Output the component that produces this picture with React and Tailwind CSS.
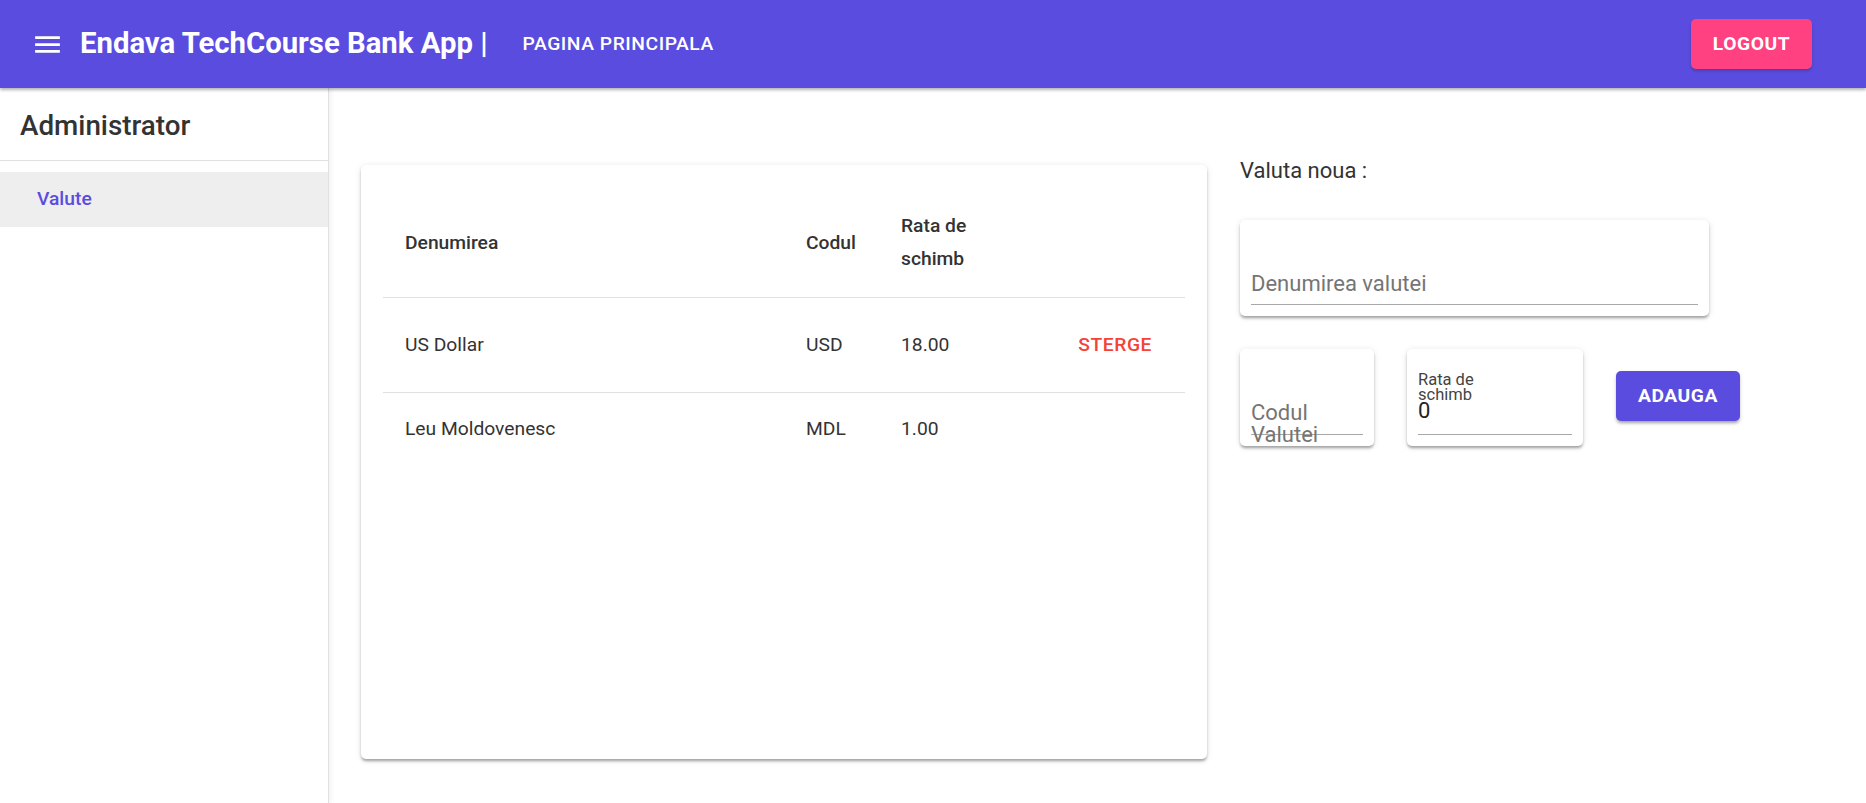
import React from 'react';

const currencies = [
  { name: 'US Dollar', code: 'USD', rate: '18.00', removable: true },
  { name: 'Leu Moldovenesc', code: 'MDL', rate: '1.00', removable: false },
];

const MenuIcon = () => (
  <svg viewBox="0 0 24 24" className="w-[33px] h-[33px] fill-white">
    <path d="M3 18h18v-2H3v2zm0-5h18v-2H3v2zm0-7v2h18V6H3z" />
  </svg>
);

const cardShadow =
  'shadow-[0_3px_3px_-1px_rgba(0,0,0,0.22),0_2px_3px_0_rgba(0,0,0,0.14),0_1px_7px_0_rgba(0,0,0,0.1)]';

const App = () => {
  return (
    <div className="min-h-screen bg-white font-['Roboto',sans-serif] text-[rgba(0,0,0,0.87)]">
      {/* Header */}
      <header className="relative z-10 h-[88px] bg-[#5b4ce0] flex items-center pl-[31px] pr-[54px] shadow-[0_2px_3px_rgba(0,0,0,0.3)]">
        <MenuIcon />
        <h1 className="ml-[16px] text-[29.3px] font-bold text-white leading-none">
          Endava TechCourse Bank App |
        </h1>
        <button className="ml-[24px] px-[11px] text-[19.25px] font-medium tracking-[0.02857em] uppercase text-white">
          Pagina principala
        </button>
        <button className="ml-auto w-[121px] h-[50px] rounded-[5px] bg-[#ff4081] text-white text-[19.25px] font-bold tracking-[0.02857em] uppercase shadow-[0_2px_3px_rgba(0,0,0,0.2)]">
          Logout
        </button>
      </header>

      <div className="flex min-h-[715px]">
        {/* Sidebar */}
        <aside className="w-[329px] shrink-0 border-r border-[#e0e0e0] shadow-[2px_0_5px_rgba(0,0,0,0.06)]">
          <div className="h-[72px] flex items-center pl-[20px] pt-[3px] text-[27.8px] font-medium text-[#333]">
            Administrator
          </div>
          <div className="h-px bg-[#e0e0e0]" />
          <nav className="pt-[11px]">
            <div className="h-[55px] bg-[#eeeeee] flex items-center pl-[37px] text-[19.25px] font-medium text-[#5b4ce0]">
              Valute
            </div>
          </nav>
        </aside>

        {/* Main */}
        <main className="flex-1 flex items-start pl-[32px] pt-[70px] gap-[33px]">
          <div className={`mt-[7px] w-[846px] h-[594px] bg-white rounded-[5px] p-[22px] ${cardShadow}`}>
            <table className="w-full table-fixed border-collapse text-[19.25px] text-[#333]">
              <colgroup>
                <col className="w-[401px]" />
                <col className="w-[95px]" />
                <col className="w-[110px]" />
                <col />
              </colgroup>
              <thead>
                <tr className="border-b border-[#e0e0e0]">
                  <th className="p-[22px] text-left font-medium leading-[33px]">Denumirea</th>
                  <th className="p-[22px] text-left font-medium leading-[33px]">Codul</th>
                  <th className="p-[22px] text-left font-medium leading-[33px]">Rata de schimb</th>
                  <th className="p-[22px]" />
                </tr>
              </thead>
              <tbody>
                {currencies.map((c, i) => (
                  <tr
                    key={c.code}
                    className={i < currencies.length - 1 ? 'border-b border-[#e0e0e0]' : ''}
                  >
                    <td className="p-[22px] leading-[27.5px]">{c.name}</td>
                    <td className="p-[22px] leading-[27.5px]">{c.code}</td>
                    <td className="p-[22px] leading-[27.5px]">{c.rate}</td>
                    <td className="p-[22px] text-right leading-[27.5px]">
                      {c.removable && (
                        <button className="px-[11px] py-[8px] leading-[34px] font-medium tracking-[0.02857em] uppercase text-[#f44336]">
                          Sterge
                        </button>
                      )}
                    </td>
                  </tr>
                ))}
              </tbody>
            </table>
          </div>

          {/* New currency form */}
          <div className="flex flex-col">
            <p className="text-[22px] leading-[26px] text-[#333]">Valuta noua :</p>

            <div className={`mt-[36px] w-[469px] h-[96px] bg-white rounded-[5px] px-[11px] pb-[11px] flex flex-col justify-end ${cardShadow}`}>
              <div className="border-b border-[#a8a8a8] pb-[7px] text-[22px] leading-[26px] text-[#757575]">
                Denumirea valutei
              </div>
            </div>

            <div className="mt-[33px] flex items-start gap-[33px]">
              <div className={`w-[134px] h-[97px] bg-white rounded-[5px] px-[11px] pb-[11px] flex flex-col justify-end ${cardShadow}`}>
                <div className="relative h-[64px] border-b border-[#a8a8a8]">
                  <label className="absolute left-0 right-0 top-[30.5px] text-[22px] leading-[22px] text-[#757575]">
                    Codul Valutei
                  </label>
                </div>
              </div>

              <div className={`w-[176px] h-[97px] bg-white rounded-[5px] px-[11px] pb-[11px] flex flex-col justify-end ${cardShadow}`}>
                <div className="relative h-[64px] border-b border-[#a8a8a8] pt-[27px]">
                  <label className="absolute left-0 top-[1px] w-[85px] text-[16.5px] leading-[15px] text-[#444]">
                    Rata de schimb
                  </label>
                  <div className="text-[22px] leading-[26px] text-[#222]">0</div>
                </div>
              </div>

              <button className="mt-[22px] w-[124px] h-[50px] rounded-[5px] bg-[#5b4ce0] text-white text-[19.25px] font-bold tracking-[0.02857em] uppercase shadow-[0_3px_3px_-1px_rgba(0,0,0,0.25),0_2px_4px_rgba(0,0,0,0.15)]">
                Adauga
              </button>
            </div>
          </div>
        </main>
      </div>
    </div>
  );
};

export default App;
